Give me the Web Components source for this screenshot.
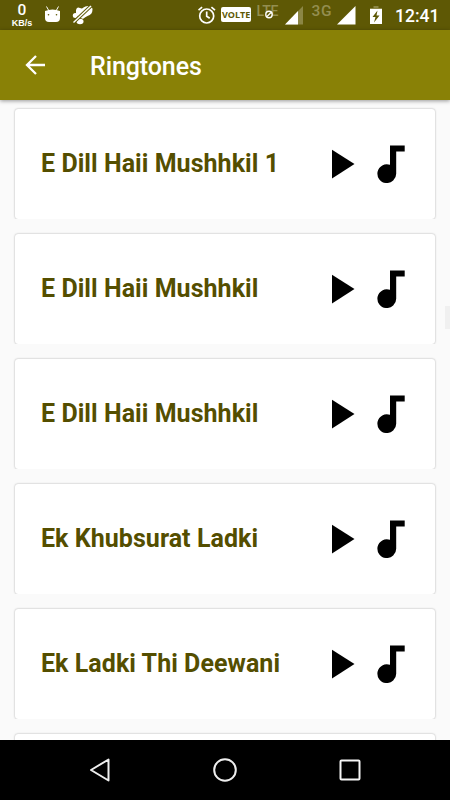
<!DOCTYPE html>
<html lang="en">
<head>
<meta charset="utf-8">
<title>Ringtones</title>
<style>
body {
    margin: 0;
    font-family: Roboto, "Liberation Sans", sans-serif;
}
</style>
</head>
<body>
<ringtone-screen>
    <status-bar></status-bar>
    <app-bar>Ringtones</app-bar>
    <ringtone-list>
        <ringtone-card>E Dill Haii Mushhkil 1</ringtone-card>
        <ringtone-card>E Dill Haii Mushhkil</ringtone-card>
        <ringtone-card>E Dill Haii Mushhkil</ringtone-card>
        <ringtone-card>Ek Khubsurat Ladki</ringtone-card>
        <ringtone-card>Ek Ladki Thi Deewani</ringtone-card>
        <ringtone-card></ringtone-card>
    </ringtone-list>
    <nav-bar></nav-bar>
</ringtone-screen>
<script>
const define = (name, template) => {
    customElements.define(name, class extends HTMLElement {
        constructor() {
            super()
            const shadow = this.attachShadow({mode: 'open'})
            shadow.innerHTML = template
        }
    })
}

define('ringtone-screen', `
<style>
:host {
    display: flex;
    flex-direction: column;
    width: 450px;
    height: 800px;
    overflow: hidden;
    background: #fafafa;
}
</style>
<slot></slot>
`)

define('status-bar', `
<style>
:host {
    display: flex;
    flex: none;
    align-items: flex-start;
    justify-content: space-between;
    box-sizing: border-box;
    height: 30px;
    background: #5e5805;
    color: #fff;
}
svg {
    display: block;
    flex: none;
}
.group {
    display: flex;
    align-items: flex-start;
}
.speed {
    display: flex;
    flex-direction: column;
    align-items: center;
    width: 24px;
    margin-left: 10px;
    padding-top: 1px;
}
.speed b {
    font-size: 15.5px;
    line-height: 18px;
    font-weight: 500;
}
.speed span {
    font: bold 9px/9px "Liberation Sans", sans-serif;
}
.volte {
    width: 30px;
    height: 15px;
    margin: 7px 0 0 5px;
    border-radius: 2px;
    background: #fff;
    color: #5e5805;
    font: bold 9px/16px "Open Sans", "DejaVu Sans", sans-serif;
    text-align: center;
}
.clock {
    font-size: 17.5px;
    line-height: 20px;
    font-weight: 500;
    margin: 6px 10.5px 0 12px;
}
</style>
<div class="group">
    <div class="speed"><b>0</b><span>KB/s</span></div>
    <svg style="margin-left:10px" width="18" height="30" viewBox="44 0 18 30">
        <path d="M46.5 6.5 49 11M58.5 6.5 56 11" stroke="#fff"/>
        <path d="M45 11Q52.5 8 60 11V18q0 4-4 4h-7q-4 0-4-4z" fill="#fff"/>
        <circle cx="48.5" cy="14.7" r=".8" fill="#5e5805"/>
        <circle cx="56.5" cy="14.7" r=".8" fill="#5e5805"/>
    </svg>
    <svg style="margin-left:9px" width="24" height="30" viewBox="71 0 24 30">
        <path d="M76 10q1-3.5 4-2 2 1 3.5-.5 2-2 6-1.5 3 .5 3 3.5 0 5-5 6.5-2.500 1-4 2.500-1 1-3-1-5-2-4.500-5z" fill="#fff"/>
        <circle cx="75.3" cy="15.5" r="2.5" fill="#fff"/>
        <ellipse cx="80" cy="21.5" rx="3.5" ry="2.8" fill="#fff"/>
        <path d="M73.5 22.5 91 6" stroke="#5e5805" stroke-width="3.4"/>
        <path d="M73.5 22.5 91 6" stroke="#fff" stroke-width="1.5"/>
    </svg>
</div>
<div class="group">
    <svg width="18" height="30" viewBox="199 0 18 30" fill="none" stroke="#fff" stroke-width="1.7">
        <circle cx="207.7" cy="16" r="7"/>
        <path d="M207.7 11.5v4.8l3 2M199.5 10.2l3.6-3.1M216 10.2l-3.6-3.1"/>
    </svg>
    <div class="volte">VOLTE</div>
    <svg style="margin-left:5px" width="48" height="30" viewBox="257 0 48 30">
        <text x="257.5" y="16" font-size="14" font-weight="500" fill="#938e50" textLength="22">LTE</text>
        <circle cx="270" cy="14.5" r="3.2" fill="#5e5805" stroke="#fff" stroke-width="1.4"/>
        <path d="M268 16.5l4-4" stroke="#fff" stroke-width="1.2"/>
        <path d="M286 24.5 304 6V24.5z" fill="#8b8645"/>
        <path d="M286 24.5 299 11V24.5z" fill="#fff"/>
    </svg>
    <svg style="margin-left:7px" width="46" height="30" viewBox="312 0 46 30">
        <text x="312.5" y="16" font-size="15.5" font-weight="500" fill="#938e50" textLength="20">3G</text>
        <path d="M338 24.5 356.5 6V24.5z" fill="#fff"/>
    </svg>
    <svg style="margin-left:12px" width="14" height="30" viewBox="370 0 14 30">
        <path d="M374.5 6h5v2h3.5v3h-12V8h3.5z" fill="#8b8645"/>
        <path d="M371 9h12v15h-12z" fill="#fff"/>
        <path d="M378.5 10.5 373.5 17h3l-1.5 5.5 5.5-7h-3z" fill="#5e5805"/>
    </svg>
    <div class="clock">12:41</div>
</div>
`)

define('app-bar', `
<style>
:host {
    display: flex;
    flex: none;
    align-items: center;
    z-index: 1;
    height: 70px;
    background: #898106;
    box-shadow: 0 1px 4px rgba(0, 0, 0, .4);
    color: #fff;
}
svg {
    margin-left: 25px;
}
h1 {
    margin: 3px 0 0 45px;
    font-size: 25px;
    line-height: 30px;
    font-weight: 500;
    letter-spacing: -0.1px;
}
</style>
<svg width="20" height="20" viewBox="0 0 20 20" fill="none" stroke="#fff" stroke-width="2.3">
    <path d="M20 10H2M11 1 2 10l9 9"/>
</svg>
<h1><slot></slot></h1>
`)

define('ringtone-list', `
<style>
:host {
    display: flex;
    flex: 1;
    flex-direction: column;
    gap: 15px;
    min-height: 0;
    padding: 9px 15px 0;
    box-sizing: border-box;
    overflow: hidden;
    position: relative;
}
/* fast-scroll thumb over the right edge */
.thumb {
    position: absolute;
    right: 0;
    top: 206px;
    width: 5px;
    height: 23px;
    background: #f0f0f0;
}
</style>
<slot></slot>
<div class="thumb"></div>
`)

define('ringtone-card', `
<style>
:host {
    display: flex;
    flex: none;
    align-items: center;
    box-sizing: border-box;
    height: 110px;
    padding: 0 30px 0 26px;
    border-radius: 3px;
    background: #fff;
    box-shadow: 0 0 2px rgba(0, 0, 0, .36);
    clip-path: inset(-2px -3px 0 -3px);
    color: #544e00;
}
.name {
    flex: 1;
    font-size: 25px;
    line-height: 30px;
    font-weight: 700;
    letter-spacing: 0.05px;
    white-space: nowrap;
}
svg {
    display: block;
    flex: none;
}
.note {
    margin-left: 22px;
}
</style>
<div class="name"><slot></slot></div>
<svg width="23" height="38" viewBox="0 0 23 38">
    <path d="M0 4.8 22.5 19 0 33.4z"/>
</svg>
<svg class="note" width="28" height="38" viewBox="0 0 28 38">
    <path d="M13 .4H27.7V6.5H19.2V28.4A9.4 9.4 0 1 1 13 19.8z"/>
</svg>
`)

define('nav-bar', `
<style>
:host {
    display: flex;
    flex: none;
    align-items: center;
    justify-content: center;
    gap: 101px;
    height: 60px;
    background: #000;
}
svg {
    display: block;
}
</style>
<svg width="24" height="24" viewBox="0 0 24 24" fill="none" stroke="#eee" stroke-width="2" stroke-linejoin="round">
    <path d="M20.5 1.5v21L3 12z"/>
</svg>
<svg width="24" height="24" viewBox="0 0 24 24" fill="none" stroke="#eee" stroke-width="2">
    <circle cx="12" cy="12" r="10.8"/>
</svg>
<svg width="24" height="24" viewBox="0 0 24 24" fill="none" stroke="#f5f5f5" stroke-width="2">
    <rect x="2.5" y="2.5" width="19" height="19" rx="1"/>
</svg>
`)
</script>
</body>
</html>
